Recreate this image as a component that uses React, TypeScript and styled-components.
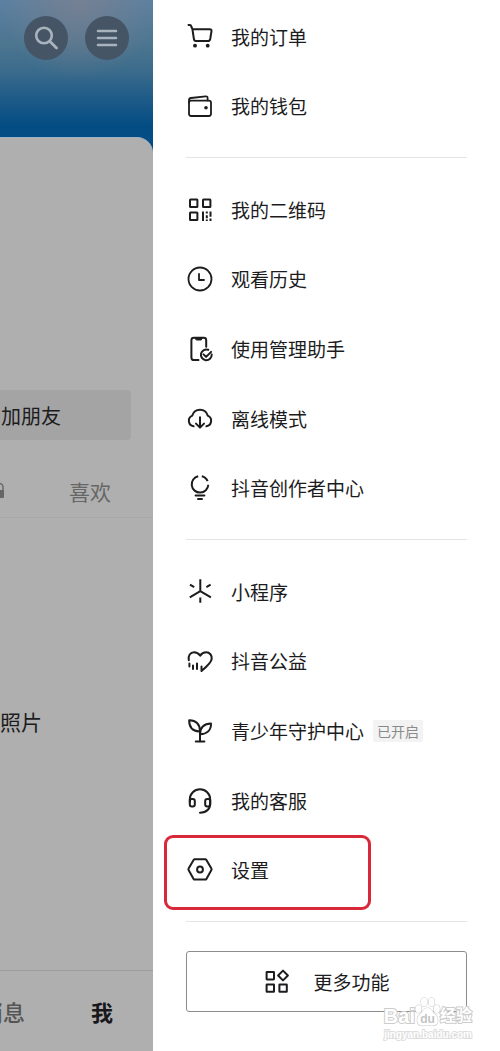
import React from 'react';
import styled, { createGlobalStyle } from 'styled-components';

const GlobalStyle = createGlobalStyle`
  * { box-sizing: border-box; }
  body {
    margin: 0;
    background: #fff;
    color: #1c1c1e;
    font-family: "Noto Sans CJK SC", "Noto Sans", sans-serif;
  }
  button { font: inherit; color: inherit; cursor: pointer; }
`;

const Page = styled.div`
  position: relative;
  display: grid;
  grid-template-columns: 153px minmax(0, 1fr);
  min-height: 100vh;
  overflow: hidden;
`;

/* ---- dimmed profile page ---- */

const Profile = styled.main`
  display: flex;
  flex-direction: column;
  overflow: hidden;
  background:
    radial-gradient(circle at 80px 0, rgba(128, 128, 140, 0.7), rgba(128, 128, 140, 0) 80px),
    linear-gradient(#5c81a2 0, #4c7590 45px, #3c6c8c 70px, #1f5b88 98px, #044d84 125px, #024c86 170px);
`;

const Cover = styled.header`
  display: flex;
  gap: 17px;
  justify-content: flex-end;
  height: 137px;
  padding: 16px 24px 0 0;
`;

const RoundButton = styled.button`
  display: grid;
  place-items: center;
  width: 44px;
  height: 44px;
  padding: 0;
  border: 0;
  border-radius: 50%;
  background: #455566;
  color: #a9b3be;
`;

const Sheet = styled.div`
  flex: 1;
  display: flex;
  flex-direction: column;
  padding-top: 252px;
  border-top: 1px solid #9fb2c4;
  border-top-right-radius: 16px;
  background: #afafaf;
`;

const AddFriend = styled.button`
  display: flex;
  align-items: center;
  justify-content: flex-end;
  height: 50px;
  margin-right: 22px;
  padding: 0 70px 0 0;
  border: 0;
  border-radius: 0 4px 4px 0;
  background: #a4a4a4;
  font-size: 20px;
  white-space: nowrap;
`;

const Tabs = styled.div`
  display: flex;
  align-items: center;
  justify-content: space-between;
  height: 78px;
  padding: 24px 42px 0 0;
  border-bottom: 1px solid #a8a8a8;
  color: #666;
`;

const Tab = styled.button`
  padding: 0;
  border: 0;
  background: none;
  font-size: 21px;
  line-height: 30px;
`;

const Empty = styled.p`
  flex: 1;
  margin: 0;
  padding-top: 187px;
  font-size: 21px;
  line-height: 32px;
`;

const BottomNav = styled.nav`
  display: flex;
  align-items: center;
  justify-content: flex-end;
  gap: 66px;
  height: 81px;
  padding: 0 40px 0 0;
  border-top: 1px solid #9c9c9c;
`;

const NavItem = styled.button<{ $active?: boolean }>`
  flex: none;
  padding: 0;
  border: 0;
  background: none;
  color: ${(p) => (p.$active ? '#17171c' : '#555')};
  font-size: 22px;
  font-weight: ${(p) => (p.$active ? 700 : 500)};
  white-space: nowrap;
`;

/* ---- side drawer ---- */

const Drawer = styled.aside`
  padding: 2px 33px 39px;
  background: #fff;
`;

const Group = styled.ul<{ $height: number }>`
  display: grid;
  grid-auto-rows: 1fr;
  height: ${(p) => p.$height}px;
  margin: 0;
  padding: 0;
  list-style: none;
`;

const Item = styled.li`
  position: relative;
  display: flex;
`;

const Row = styled.button`
  display: flex;
  align-items: center;
  width: 100%;
  padding: 0;
  border: 0;
  background: none;
  font-size: 19px;
  text-align: left;
  white-space: nowrap;
`;

const Label = styled.span`
  margin-left: 17px;
  padding-bottom: 1px;
`;

const Badge = styled.span`
  margin-left: 9px;
  padding: 0 4px;
  border-radius: 2px;
  background: #f3f3f3;
  color: #8a8a8a;
  font-size: 14px;
  line-height: 22px;
`;

const Highlight = styled.span`
  position: absolute;
  top: 0;
  left: -22px;
  width: 207px;
  height: 75px;
  border: 3px solid #d8283a;
  border-radius: 9px;
  pointer-events: none;
`;

const Divider = styled.hr`
  height: 1px;
  margin: 16px 0 17px;
  border: 0;
  background: #e4e4e4;
`;

const MoreButton = styled.button`
  display: flex;
  align-items: center;
  justify-content: center;
  gap: 22px;
  width: 100%;
  height: 61px;
  margin-top: 29px;
  padding: 0;
  border: 1px solid #8c8c8c;
  border-radius: 3px;
  background: #fff;
  font-size: 19px;
`;

const Glyph = styled.svg`
  flex: none;
  fill: none;
  stroke: currentColor;
  stroke-width: 2;
  stroke-linecap: round;
  stroke-linejoin: round;
`;

/* ---- site mark over the corner ---- */

const Mark = styled.div`
  position: absolute;
  right: 28px;
  bottom: 9px;
  color: #fff;
  font-family: "Liberation Sans", "Noto Sans CJK SC", sans-serif;
  font-weight: 700;
  text-align: right;
  -webkit-text-stroke: 2px #cccccc;
  paint-order: stroke fill;
  pointer-events: none;
`;

const MarkName = styled.div`
  display: flex;
  align-items: center;
  justify-content: flex-end;
  height: 24px;
  font-size: 20px;
  line-height: 24px;
`;

const MarkChars = styled.span`
  font-size: 16px;
`;

const MarkPaw = styled.svg`
  flex: none;
  margin-top: -8px;
  overflow: visible;
`;

const MarkSite = styled.div`
  font-size: 10px;
  line-height: 14px;
  color: #fff;
  -webkit-text-stroke: 2px #dedede;
`;

const icons: Record<string, React.ReactNode> = {
  cart: (
    <>
      <path d="M2.5 2h1.2q1.3 0 1.6 1.5L6.4 6.2h17.200q2.200 0 1.900 2l-1.300 7.800q-.4 2-2.200 2H10q-1.900 0-2.100-2L6.400 6.200" />
      <circle cx="9" cy="22.700" r="1.900" fill="currentColor" stroke="none" />
      <circle cx="21.700" cy="22.700" r="1.900" fill="currentColor" stroke="none" />
    </>
  ),
  wallet: (
    <g strokeWidth="1.800">
      <rect x="3" y="8.600" width="22" height="15.400" rx="2.200" />
      <path d="M3 10.500V8.200q0-2 2-2.200l14.700-1.700q1.900-.2 1.900 1.700v2.400" />
      <circle cx="20" cy="15.800" r="1.800" fill="currentColor" stroke="none" />
    </g>
  ),
  qr: (
    <g strokeLinecap="butt">
      <rect x="4" y="3.600" width="7.400" height="7.400" rx=".5" />
      <rect x="17" y="3.600" width="7.400" height="7.400" rx=".5" />
      <rect x="4" y="16.600" width="7.400" height="7.400" rx=".5" />
      <path d="M17 15.600v9.400M20.800 15.600v2M20.800 19.200v3M20.800 23.400v1.600M24.500 15.600v5.200M24.500 22.400v2.600" />
    </g>
  ),
  clock: (
    <>
      <circle cx="14" cy="14" r="11.500" strokeWidth="1.800" />
      <path d="M13 9v6h5" strokeWidth="1.800" />
    </>
  ),
  phone: (
    <>
      <path d="M12.500 25H8q-2.600 0-2.600-2.600V5.200q0-2.400 2.600-2.400h9.600q2.600 0 2.600 2.400v6.600" />
      <path d="M9.400 3h7l-1.200 2h-4.600z" fill="currentColor" strokeWidth="1" />
      <path d="M22.300 14.800A5.400 5.400 0 1 0 25.700 19.600M17.500 19.400l2.600 2.500 5-5" />
    </>
  ),
  cloud: (
    <>
      <path d="M7.600 21.300A5.600 5.600 0 0 1 6.300 10.600a8 8 0 0 1 15.400 0A5.600 5.600 0 0 1 20.400 21.300" />
      <path d="M14 12.300v10M10 18.600l4 4 4-4" />
    </>
  ),
  bulb: (
    <>
      <path d="M12.200 2.200A8.300 8.300 0 1 0 22.300 10.800" strokeLinecap="butt" />
      <path d="M15.800 2.200A8.300 8.300 0 0 1 21.600 7.200" strokeLinecap="butt" />
      <path d="M9.600 21.400h8.800M12 25h4" />
    </>
  ),
  spark: (
    <g strokeLinecap="butt">
      <path d="M14.300 1.200v11.900L3.800 19.300M14.300 13.100l10.600 6.200M4 6.600l4.200 2.500M24.600 6.600l-4.200 2.500M14.300 19.600v5.200" />
    </g>
  ),
  heart: (
    <>
      <path d="M2.800 13.200C1.800 8.600 4.400 5.300 8 5.300c2.800 0 4.600 1.200 6.200 3.300 1.400-2.100 3.400-3.300 6-3.300 3.600 0 5.800 3 5.500 6.600-.3 3.900-5 7.800-10.200 12.100v-4.600" />
      <path d="M3.400 16.400v3M7 18.600v3.400M11 16.400v5.600" />
    </>
  ),
  sprout: (
    <>
      <path d="M14 24.200V14C14 7.400 9.800 3 3.200 3.200 3 9.800 6.600 14 13.400 14.400" />
      <path d="M14 17.200C13.800 11 18 6.600 25 6.600c.2 6.600-4 10.600-11 10.600zM9.800 24.400h8.600" />
    </>
  ),
  headset: (
    <>
      <path d="M3.800 15V12.400a10.200 10.200 0 0 1 20.400 0V16c0 6.200-3.800 9.500-10.200 9.800" />
      <rect x="3.800" y="12" width="5" height="7.600" rx="2" />
      <rect x="19.200" y="12" width="5" height="7.600" rx="2" />
    </>
  ),
  settings: (
    <>
      <path d="M8.800 3.300h10.400q.8 0 1.200.7l5 8.600q.4.700 0 1.400l-5 8.900q-.4.700-1.200.7H8.800q-.8 0-1.200-.7l-5-8.900q-.4-.7 0-1.400l5-8.600q.4-.7 1.200-.7z" />
      <circle cx="14" cy="13.500" r="2.900" />
    </>
  ),
  more: (
    <>
      <rect x="3.600" y="4" width="7.400" height="7.400" rx=".4" />
      <rect x="3.600" y="16.400" width="7.400" height="7.400" rx=".4" />
      <rect x="16.400" y="16.400" width="7.400" height="7.400" rx=".4" />
      <path d="M20 2.600l4.900 4.900-4.900 4.900-4.900-4.900z" />
    </>
  ),
};

const Icon = ({ name }: { name: string }) => (
  <Glyph width="28" height="28" viewBox="0 0 28 28" aria-hidden="true">
    {icons[name]}
  </Glyph>
);

interface Entry {
  icon: string;
  label: string;
  badge?: string;
  marked?: boolean;
}

const groups: { height: number; entries: Entry[] }[] = [
  {
    height: 139,
    entries: [
      { icon: 'cart', label: '我的订单' },
      { icon: 'wallet', label: '我的钱包' },
    ],
  },
  {
    height: 348,
    entries: [
      { icon: 'qr', label: '我的二维码' },
      { icon: 'clock', label: '观看历史' },
      { icon: 'phone', label: '使用管理助手' },
      { icon: 'cloud', label: '离线模式' },
      { icon: 'bulb', label: '抖音创作者中心' },
    ],
  },
  {
    height: 348,
    entries: [
      { icon: 'spark', label: '小程序' },
      { icon: 'heart', label: '抖音公益' },
      { icon: 'sprout', label: '青少年守护中心', badge: '已开启' },
      { icon: 'headset', label: '我的客服' },
      { icon: 'settings', label: '设置', marked: true },
    ],
  },
];

export default function App() {
  return (
    <>
      <GlobalStyle />
      <Page>
        <Profile>
          <Cover>
            <RoundButton aria-label="搜索">
              <Glyph width="24" height="24" viewBox="0 0 24 24">
                <circle cx="10" cy="9.500" r="7.800" strokeWidth="2.600" />
                <path d="M16 15.500l6.500 6.500" strokeWidth="2.800" />
              </Glyph>
            </RoundButton>
            <RoundButton aria-label="菜单">
              <Glyph width="24" height="24" viewBox="0 0 24 24">
                <path d="M3 5h18M3 12h18M3 19h18" strokeWidth="2.600" />
              </Glyph>
            </RoundButton>
          </Cover>
          <Sheet>
            <AddFriend>加朋友</AddFriend>
            <Tabs>
              <Glyph width="5" height="18" viewBox="0 0 5 18" aria-hidden="true">
                <path d="M-4 8V5a3.500 3.500 0 0 1 7 0v3" strokeWidth="1.400" />
                <rect x="-8" y="8" width="12" height="8" rx="1" fill="currentColor" stroke="none" />
              </Glyph>
              <Tab>喜欢</Tab>
            </Tabs>
            <Empty>照片</Empty>
            <BottomNav>
              <NavItem>消息</NavItem>
              <NavItem $active>我</NavItem>
            </BottomNav>
          </Sheet>
        </Profile>

        <Drawer>
          {groups.map((group) => (
            <React.Fragment key={group.entries[0].label}>
              <Group $height={group.height}>
                {group.entries.map((entry) => (
                  <Item key={entry.label}>
                    <Row>
                      <Icon name={entry.icon} />
                      <Label>{entry.label}</Label>
                      {entry.badge && <Badge>{entry.badge}</Badge>}
                    </Row>
                    {entry.marked && <Highlight />}
                  </Item>
                ))}
              </Group>
              <Divider />
            </React.Fragment>
          ))}
          <MoreButton>
            <Icon name="more" />
            更多功能
          </MoreButton>
        </Drawer>

        <Mark>
          <MarkName>
            Bai
            <MarkPaw width="25" height="30" viewBox="0 0 25 30" fill="#fff" stroke="#cfcfcf" strokeWidth="1.200">
              <ellipse cx="3.500" cy="12" rx="3" ry="4" />
              <ellipse cx="9" cy="5" rx="3" ry="4.500" />
              <ellipse cx="16.500" cy="5" rx="3" ry="4.500" />
              <ellipse cx="21.800" cy="12" rx="3" ry="4" />
              <path d="M12.500 11c4 0 5 4 8 7s3.500 10-2 10.500c-3 .3-4-.5-6-.5s-3 .8-6 .5C1 28 1.500 21 4.500 18s4-7 8-7z" />
              <text x="12.500" y="26" textAnchor="middle" fontSize="12" strokeWidth="0" fill="#c4c4c4">du</text>
            </MarkPaw>
            <MarkChars>经验</MarkChars>
          </MarkName>
          <MarkSite>jingyan.baidu.com</MarkSite>
        </Mark>
      </Page>
    </>
  );
}
